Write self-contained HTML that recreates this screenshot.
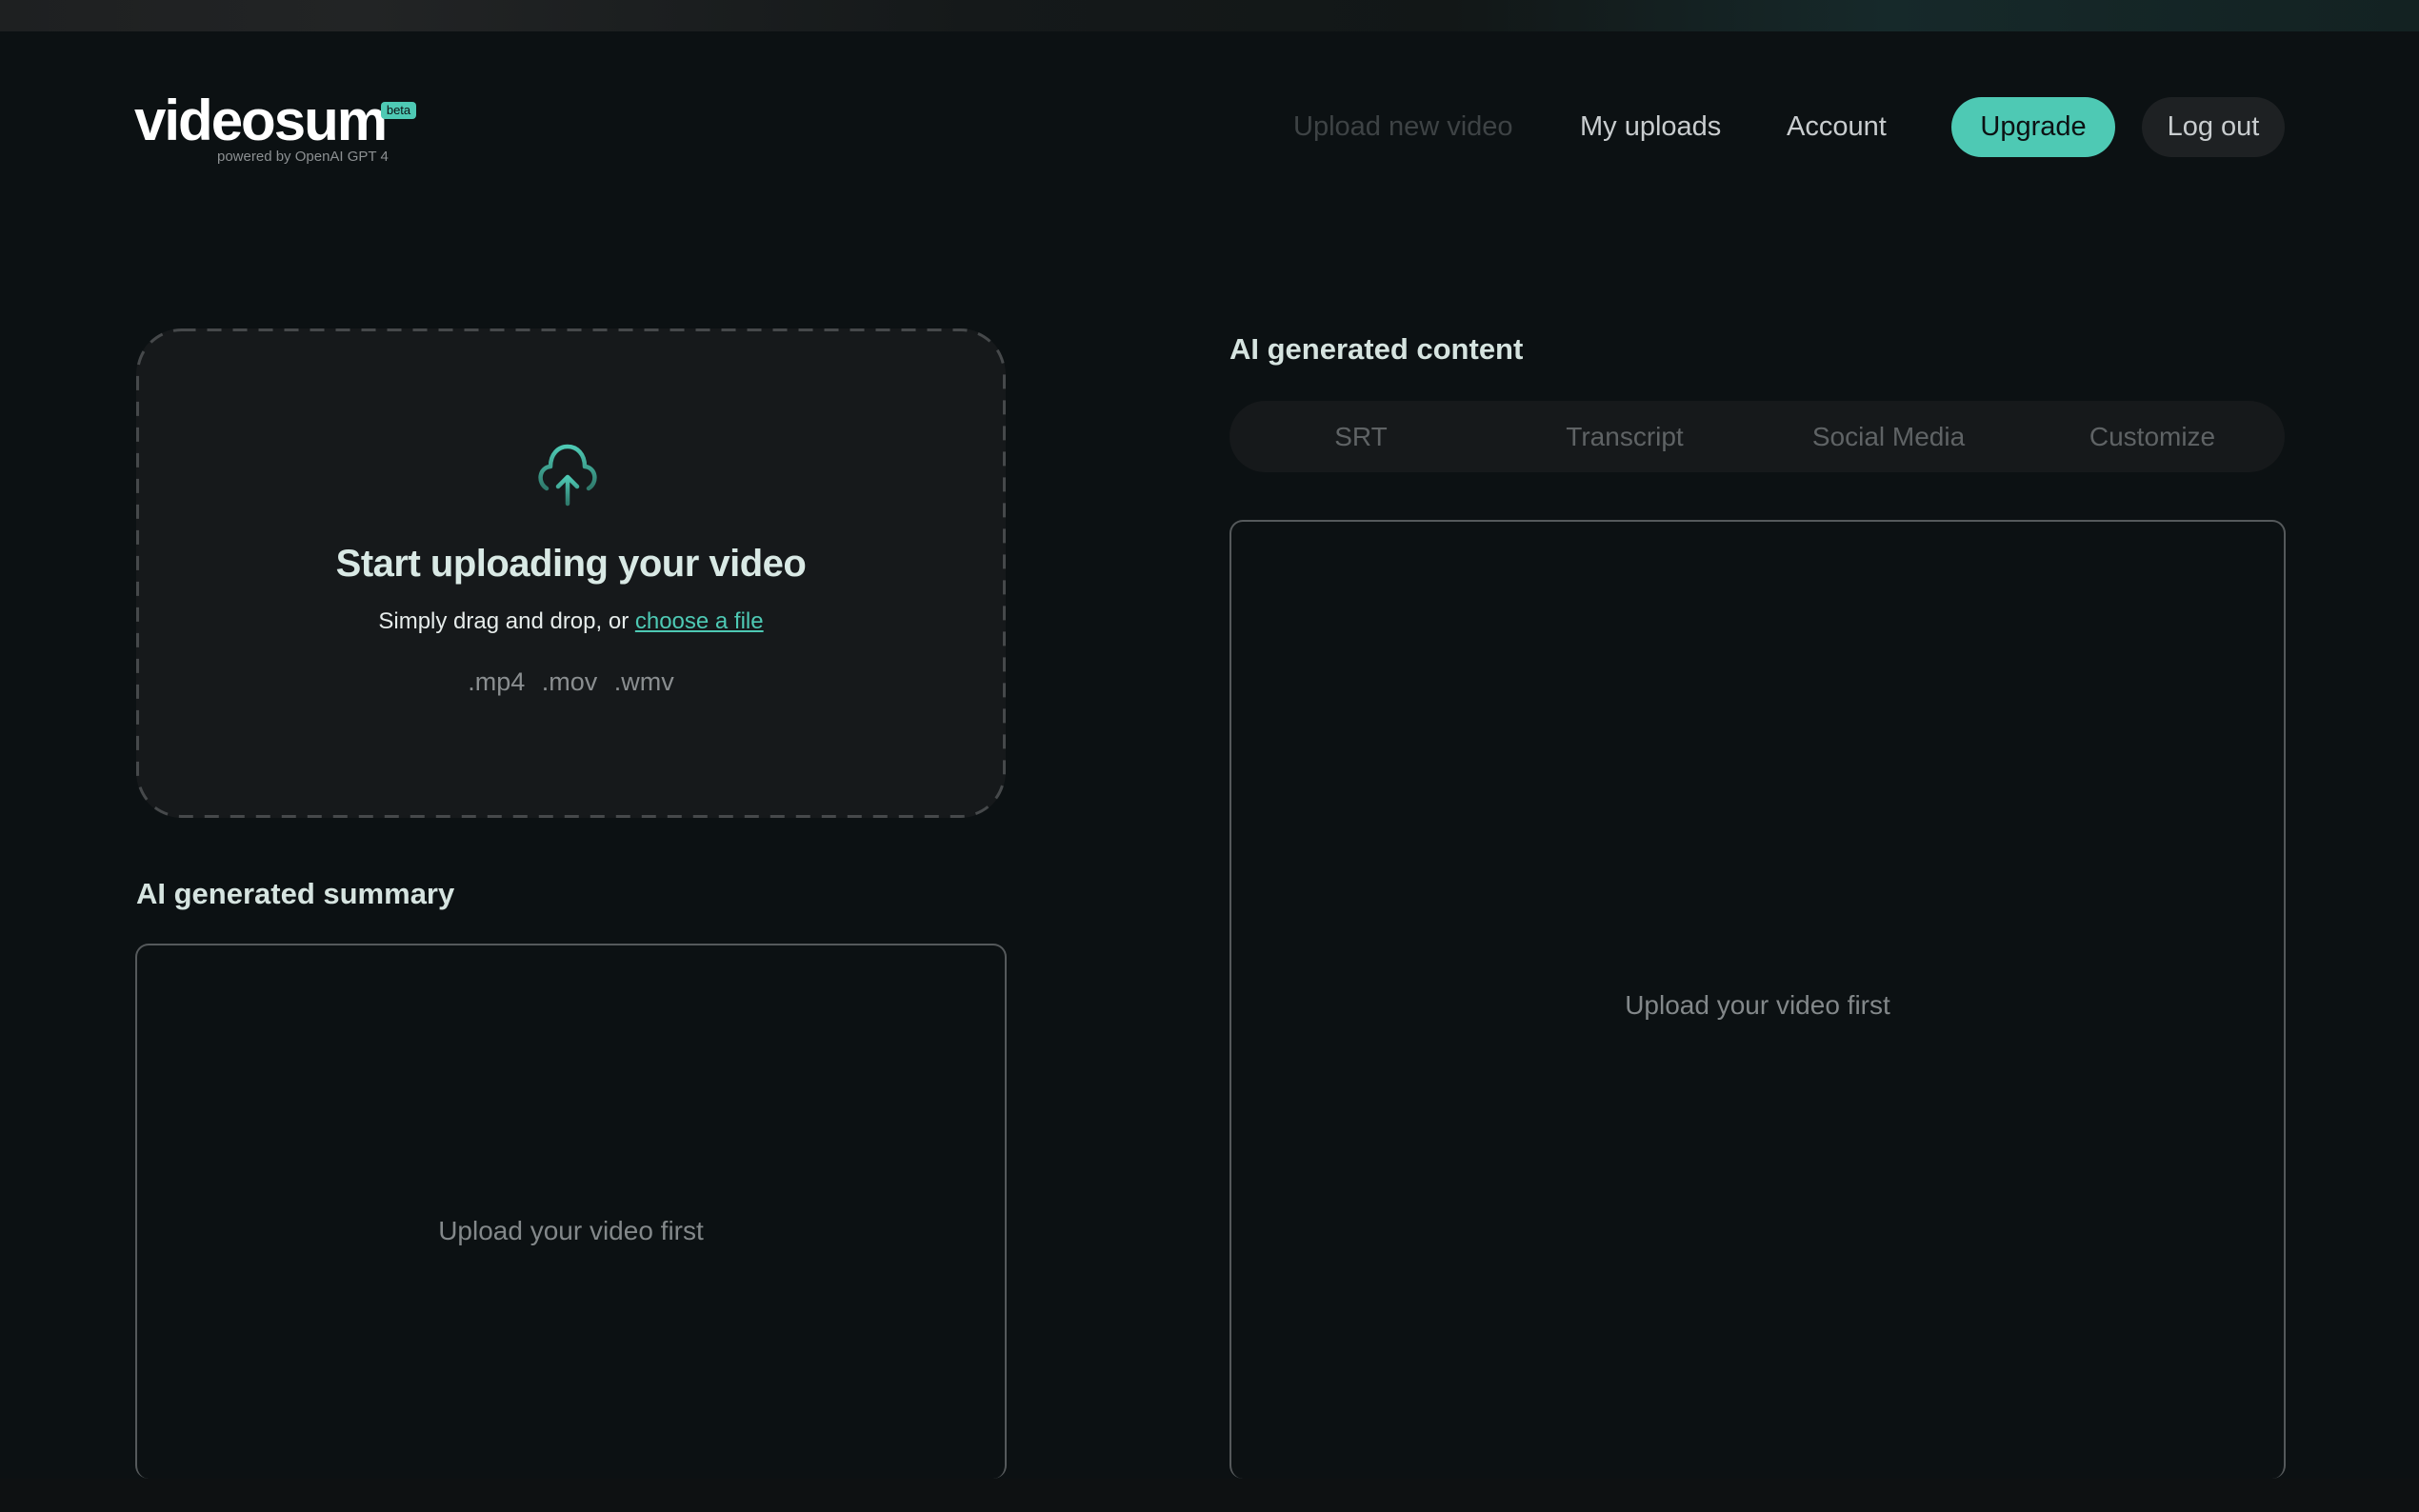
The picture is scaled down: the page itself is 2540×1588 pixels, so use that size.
<!DOCTYPE html>
<html><head><meta charset="utf-8"><style>
*{margin:0;padding:0;box-sizing:border-box}
body{width:2540px;height:1588px;background:#0c1113;font-family:"Liberation Sans",sans-serif;position:relative;overflow:hidden;color:#dfe7e5}
.top{position:absolute;left:0;top:0;width:2540px;height:33px;background:linear-gradient(90deg,#1e2021 0%,#222425 15%,#15191a 40%,#121717 60%,#16292a 78%,#132222 100%)}
.bot{position:absolute;left:0;top:1553px;width:2540px;height:35px;background:#0e1112}
.abs{position:absolute;white-space:nowrap}
.logo{left:141px;top:92px;font-size:60px;font-weight:bold;color:#fff;letter-spacing:-2px}
.beta{left:400px;top:107px;width:37px;height:18px;background:#4ec9b4;border-radius:4px;color:#0c1113;font-size:13px;text-align:center;line-height:18px}
.pow{left:228px;top:156px;font-size:15px;color:#8c9092}
.nav{top:115px;font-size:29px;line-height:36px}
.btn{top:102px;height:63px;border-radius:32px;font-size:29px;line-height:63px;text-align:center}
.up{left:143px;top:345px;width:913px;height:514px;border-radius:48px;background:#16191b}
h2{position:absolute;font-size:31px;font-weight:bold;color:#d6e4e0}
.box{position:absolute;border:2px solid #55595b;border-radius:14px;border-bottom:none}
.ph{position:absolute;width:100%;text-align:center;font-size:28px;color:#83888a}
.tabs{left:1291px;top:421px;width:1108px;height:75px;border-radius:38px;background:#16191b}
.tab{position:absolute;top:0;line-height:75px;font-size:28px;color:#5f6365;transform:translateX(-50%)}
</style></head><body>
<div class="top"></div>
<div class="abs logo">videosum</div>
<div class="abs beta">beta</div>
<div class="abs pow">powered by OpenAI GPT 4</div>
<div class="abs nav" style="left:1358px;color:#3e4345">Upload new video</div>
<div class="abs nav" style="left:1659px;color:#c9cdcf">My uploads</div>
<div class="abs nav" style="left:1876px;color:#c9cdcf">Account</div>
<div class="abs btn" style="left:2049px;width:172px;background:#4ec9b4;color:#0c1113">Upgrade</div>
<div class="abs btn" style="left:2249px;width:150px;background:#1e2123;color:#c9cdcf">Log out</div>

<div class="abs up">
<svg style="position:absolute;left:0;top:0" width="913" height="514"><rect x="1.5" y="1.5" width="910" height="511" rx="46" fill="none" stroke="#46494b" stroke-width="3" stroke-dasharray="15 12"/></svg>
<svg style="position:absolute;left:415px;top:116px" width="76" height="76" viewBox="0 0 76 76" fill="none" stroke="url(#g)" stroke-width="4.5" stroke-linecap="round" stroke-linejoin="round">
<defs><linearGradient id="g" x1="0" y1="0" x2="0" y2="1"><stop offset="0" stop-color="#4ec9b4"/><stop offset="1" stop-color="#2f7a6c"/></linearGradient></defs>
<path d="M16 52 C6 46 8 30 20 29 C20 16 28 8 38 8 C48 8 56 16 56 29 C68 30 70 46 60 52"/>
<path d="M38 68 V40 M28 50 L38 40 L48 50"/>
</svg>
<div class="abs" style="left:0;width:913px;text-align:center;top:225px;font-size:40px;font-weight:bold;color:#d9e9e5;letter-spacing:-0.5px">Start uploading your video</div>
<div class="abs" style="left:0;width:913px;text-align:center;top:294px;font-size:24px;color:#e6eceb">Simply drag and drop, or <span style="color:#4ec9b4;text-decoration:underline">choose a file</span></div>
<div class="abs" style="left:0;width:913px;text-align:center;top:356px;font-size:27px;color:#8a8e90;word-spacing:10px">.mp4 .mov .wmv</div>
</div>

<h2 style="left:143px;top:921px">AI generated summary</h2>
<div class="box" style="left:142px;top:991px;width:915px;height:562px"><div class="ph" style="top:284px">Upload your video first</div></div>

<h2 style="left:1291px;top:349px">AI generated content</h2>
<div class="abs tabs">
<div class="tab" style="left:138px">SRT</div>
<div class="tab" style="left:415px">Transcript</div>
<div class="tab" style="left:692px">Social Media</div>
<div class="tab" style="left:969px">Customize</div>
</div>
<div class="box" style="left:1291px;top:546px;width:1109px;height:1007px"><div class="ph" style="top:492px">Upload your video first</div></div>
<div class="bot"></div>
</body></html>
